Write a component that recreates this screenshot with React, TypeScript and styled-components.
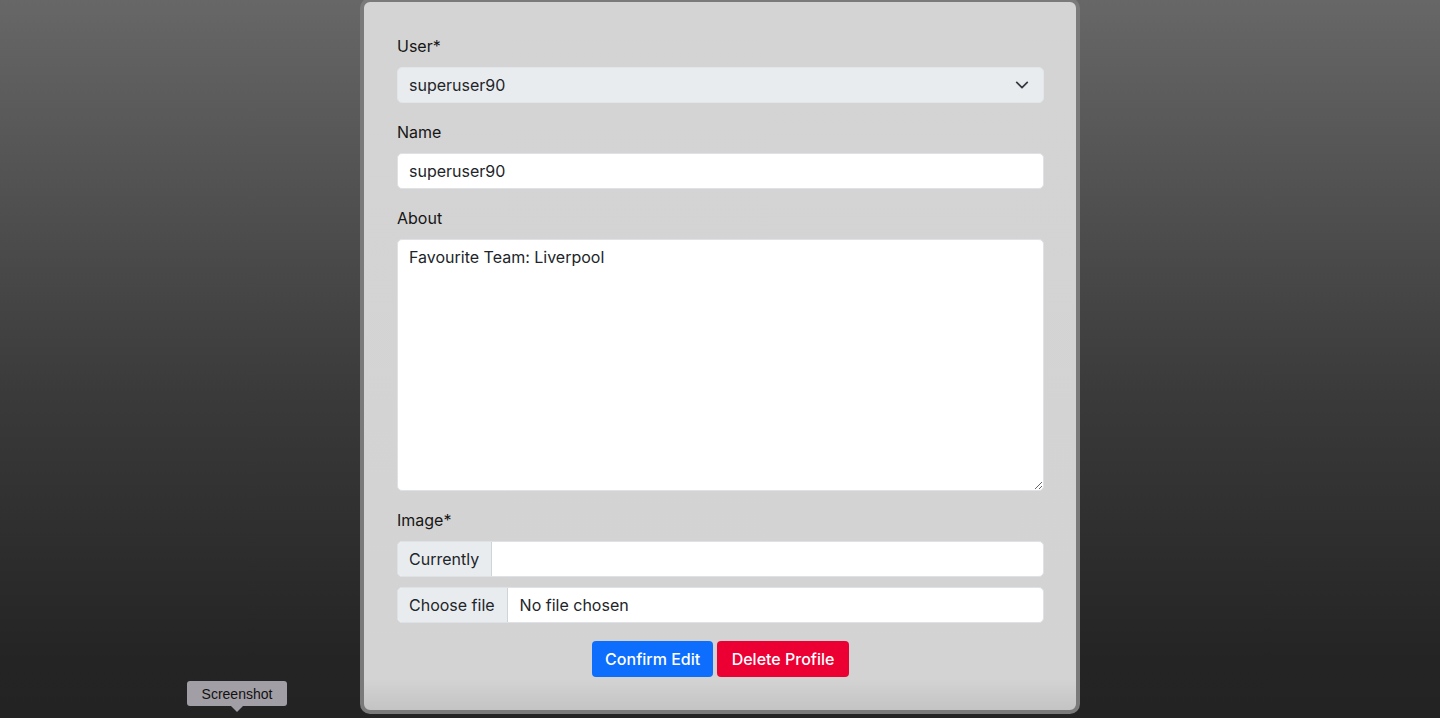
import React from "react";
import styled, { createGlobalStyle } from "styled-components";

const Global = createGlobalStyle`
  html, body { margin: 0; padding: 0; }
  body {
    height: 718px;
    overflow: hidden;
    background: linear-gradient(to bottom, #676767 0%, #3a3a3a 55%, #242424 92%, #232323 100%);
    font-family: Inter, "Noto Sans", sans-serif;
    color: #212529;
  }
  * { box-sizing: border-box; }
`;

const Page = styled.div`
  position: relative;
  height: 718px;
  display: flex;
  justify-content: center;
  align-items: flex-start;
`;

const Card = styled.div`
  width: 720px;
  margin-top: -2px;
  border: 4px solid #7a7a7a;
  border-radius: 10px;
  background: linear-gradient(to bottom, #d4d4d4 0%, #d3d3d3 calc(100% - 30px), #c4c4c4 100%);
  padding: 32px 32px 33px 33px;
`;

const Form = styled.form`
  display: flex;
  flex-direction: column;
`;

const Label = styled.label<{ $first?: boolean }>`
  display: block;
  font-size: 16px;
  line-height: 24px;
  font-weight: 400;
  margin-top: ${(p) => (p.$first ? "0" : "17px")};
  margin-bottom: 9px;
  color: #161616;
`;

const SelectBox = styled.div`
  height: 36px;
  background: #e9ecef;
  border: 1px solid #e2e5e9;
  border-radius: 5px;
  display: flex;
  align-items: center;
  justify-content: space-between;
  padding: 0 14px 0 11px;
  font-size: 16px;
`;

const Input = styled.div`
  height: 36px;
  background: #ffffff;
  border: 1px solid #dee2e6;
  border-radius: 5px;
  display: flex;
  align-items: center;
  padding: 0 11px;
  font-size: 16px;
`;

const TextArea = styled.textarea`
  display: block;
  width: 100%;
  height: 252px;
  background: #ffffff;
  border: 1px solid #dee2e6;
  border-radius: 5px;
  padding: 5px 11px;
  font-family: Inter, "Noto Sans", sans-serif;
  font-size: 16px;
  line-height: 24px;
  color: #212529;
  resize: vertical;
  outline: none;
`;

const Group = styled.div<{ $gap?: number }>`
  display: flex;
  height: 36px;
  margin-top: ${(p) => p.$gap ?? 0}px;
  border: 1px solid #dee2e6;
  border-radius: 5px;
  overflow: hidden;
  background: #ffffff;
  font-size: 16px;
`;

const Addon = styled.div`
  display: flex;
  align-items: center;
  padding: 0 12px 0 11px;
  background: #e9ecef;
  border-right: 1px solid #d0d4d9;
  white-space: nowrap;
`;

const GroupText = styled.div`
  display: flex;
  align-items: center;
  padding: 0 12px;
  flex: 1;
`;

const Actions = styled.div`
  display: flex;
  justify-content: center;
  gap: 4px;
  margin-top: 18px;
`;

const Button = styled.button<{ $variant: "primary" | "danger" }>`
  height: 36px;
  padding: 0 ${(p) => (p.$variant === "primary" ? 13 : 14.5)}px;
  border: none;
  border-radius: 4px;
  font-family: Inter, "Noto Sans", sans-serif;
  font-size: 16px;
  font-weight: 500;
  color: #ffffff;
  background: ${(p) => (p.$variant === "primary" ? "#0d6efd" : "#ec0034")};
  cursor: pointer;
`;

const Tooltip = styled.div`
  position: absolute;
  left: 187px;
  top: 681px;
  width: 100px;
  height: 25px;
  background: #a29ea5;
  border-radius: 3px;
  display: flex;
  align-items: center;
  justify-content: center;
  font-family: "Liberation Sans", Arial, sans-serif;
  font-size: 14px;
  color: #111;
  &::after {
    content: "";
    position: absolute;
    left: 44px;
    bottom: -6px;
    border-left: 6px solid transparent;
    border-right: 6px solid transparent;
    border-top: 6px solid #a29ea5;
  }
`;

const Chevron = () => (
  <svg width="14" height="14" viewBox="0 0 16 16" fill="none">
    <path d="M2 5l6 6 6-6" stroke="#343a40" strokeWidth="2" strokeLinecap="round" strokeLinejoin="round" />
  </svg>
);

export default function App() {
  return (
    <>
      <Global />
      <Page>
        <Card>
          <Form onSubmit={(e) => e.preventDefault()}>
            <Label $first>User*</Label>
            <SelectBox>
              <span>superuser90</span>
              <Chevron />
            </SelectBox>

            <Label>Name</Label>
            <Input>superuser90</Input>

            <Label>About</Label>
            <TextArea defaultValue="Favourite Team: Liverpool" />

            <Label>Image*</Label>
            <Group>
              <Addon>Currently</Addon>
              <GroupText />
            </Group>
            <Group $gap={10}>
              <Addon>Choose file</Addon>
              <GroupText>No file chosen</GroupText>
            </Group>

            <Actions>
              <Button type="button" $variant="primary">Confirm Edit</Button>
              <Button type="button" $variant="danger">Delete Profile</Button>
            </Actions>
          </Form>
        </Card>
        <Tooltip>Screenshot</Tooltip>
      </Page>
    </>
  );
}
